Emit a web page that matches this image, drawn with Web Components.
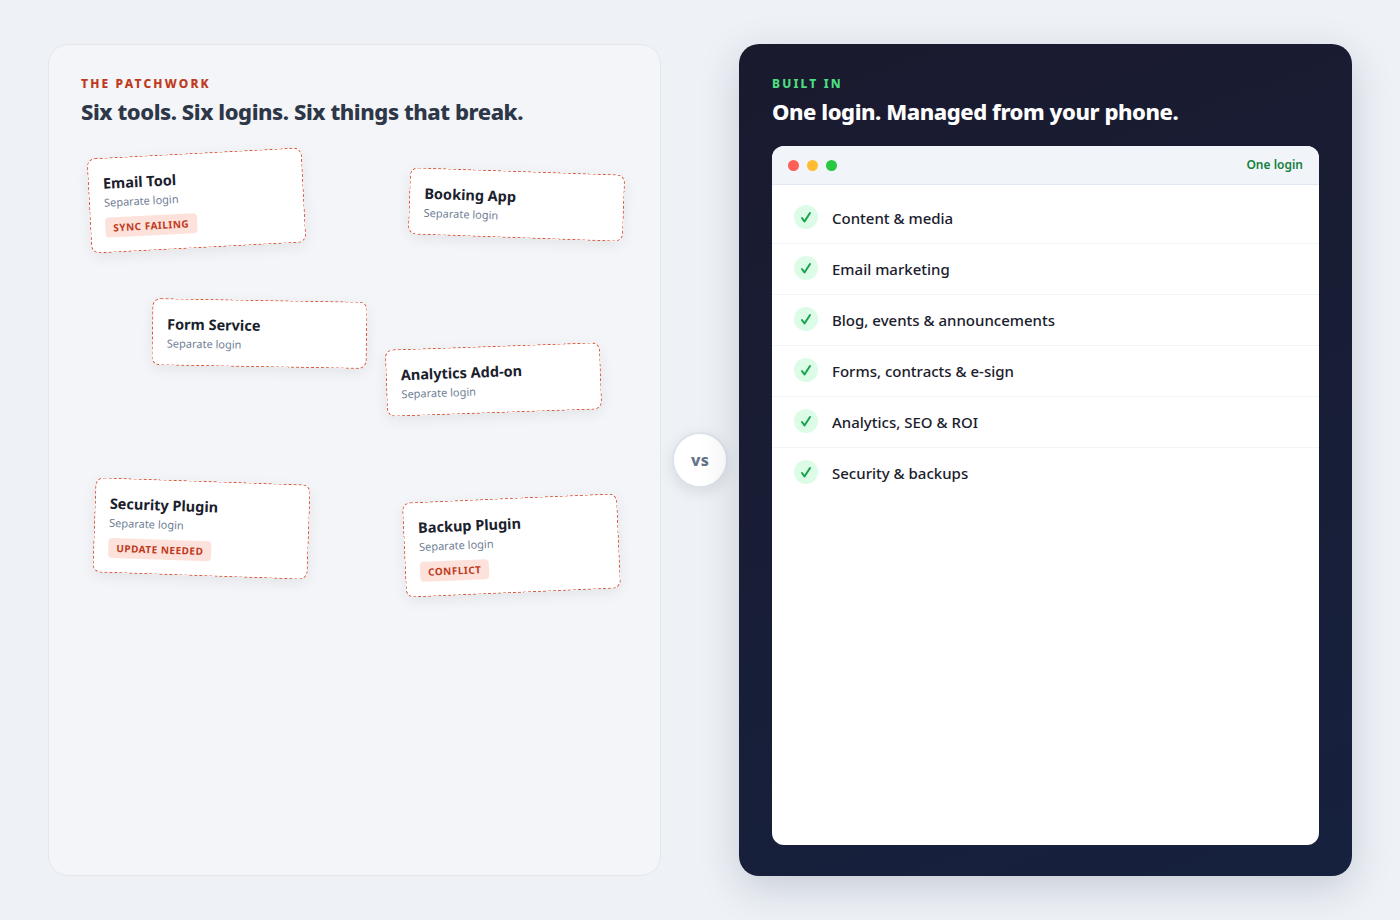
<!DOCTYPE html>
<html><head><meta charset="utf-8"><style>
html,body{margin:0;padding:0;background:#eef2f7;}
body{font-family:"Noto Sans",sans-serif;}
</style></head><body>
<compare-page>
<side-panel slot="left" data-kind="patch" eyebrow="THE PATCHWORK" title="Six tools. Six logins. Six things that break.">
<tool-card style="left:40px;top:108px" data-rot="-3" name="Email Tool" tag="SYNC FAILING"></tool-card>
<tool-card style="left:360px;top:126px" data-rot="2" name="Booking App"></tool-card>
<tool-card style="left:103px;top:255px" data-rot="1" name="Form Service"></tool-card>
<tool-card style="left:337px;top:301px" data-rot="-2" name="Analytics Add-on"></tool-card>
<tool-card style="left:45px;top:436px" data-rot="2" name="Security Plugin" tag="UPDATE NEEDED"></tool-card>
<tool-card style="left:355px;top:453px" data-rot="-2.5" name="Backup Plugin" tag="CONFLICT"></tool-card>
</side-panel>
<vs-badge slot="vs"></vs-badge>
<side-panel slot="right" data-kind="built" eyebrow="BUILT IN" title="One login. Managed from your phone.">
<app-window>
<check-row>Content &amp; media</check-row>
<check-row>Email marketing</check-row>
<check-row>Blog, events &amp; announcements</check-row>
<check-row>Forms, contracts &amp; e-sign</check-row>
<check-row>Analytics, SEO &amp; ROI</check-row>
<check-row last>Security &amp; backups</check-row>
</app-window>
</side-panel>
</compare-page>
<script>
function def(name, html, init){
  customElements.define(name, class extends HTMLElement{
    constructor(){super();this.attachShadow({mode:'open'}).innerHTML=html;}
    connectedCallback(){ if(init) init.call(this,this.shadowRoot); }
  });
}
def('compare-page',`<style>
:host{display:grid;grid-template-columns:613px 78px 613px;width:1304px;height:832px;padding:44px 48px;position:relative}
::slotted([slot=vs]){align-self:center;justify-self:center}
</style><slot name="left"></slot><slot name="vs"></slot><slot name="right"></slot>`);
def('side-panel',`<style>
:host{display:flex;flex-direction:column;box-sizing:border-box;border-radius:20px;padding:32px 33px 31px;position:relative;height:832px;min-width:0}
:host([data-kind=patch]){background:#f3f5f8;border:1px solid #e4e8ee;padding:31px 32px}
:host([data-kind=built]){background:linear-gradient(160deg,#1a1a2e,#16213e);box-shadow:0 12px 40px rgba(22,33,62,.18)}
.eb{font:800 12px/16px "Noto Sans",sans-serif;letter-spacing:2.16px}
:host([data-kind=patch]) .eb{color:#c0391b}
:host([data-kind=built]) .eb{color:#4ade80}
h2{margin:0;font:800 22px/30px "Noto Sans",sans-serif;letter-spacing:-.44px;margin-top:4px;margin-bottom:20px}
:host([data-kind=patch]) h2{color:#2d3748}
:host([data-kind=built]) h2{color:#fff}
.body{flex:1;min-height:0;display:flex;flex-direction:column}
</style><div class="eb"></div><h2></h2><div class="body"><slot></slot></div>`,function(r){
 r.querySelector('.eb').textContent=this.getAttribute('eyebrow');
 r.querySelector('h2').textContent=this.getAttribute('title');
});
def('tool-card',`<style>
:host{position:absolute;display:block;width:215px;box-sizing:border-box;background:#fff;border:1px dashed #d9573a;border-radius:8px;padding:14px 14px;box-shadow:0 4px 14px rgba(0,0,0,.07);}
.n{font:700 14.5px/20px "Noto Sans",sans-serif;color:#1a202c}
.s{font:400 11px/15px "Noto Sans",sans-serif;color:#718096;margin-top:2px}
.t{display:inline-block;font:700 10px/14px "Noto Sans",sans-serif;letter-spacing:.5px;color:#c0391b;background:#fde2dc;border-radius:4px;padding:3px 8px;margin-top:8px}
</style><div class="n"></div><div class="s">Separate login</div>`,function(r){
 r.querySelector('.n').textContent=this.getAttribute('name');
 this.style.transform='rotate('+this.dataset.rot+'deg)';
 const t=this.getAttribute('tag');
 if(t&&!r.querySelector('.t')){const d=document.createElement('div');d.innerHTML='<span class="t"></span>';d.firstChild.textContent=t;r.appendChild(d);}
});
def('vs-badge',`<style>
:host{display:flex;align-items:center;justify-content:center;width:52px;height:52px;border-radius:50%;background:#fff;border:2px solid #dde3ea;box-shadow:0 4px 16px rgba(0,0,0,.1);font:800 16px/1 "Noto Sans",sans-serif;color:#64748b;letter-spacing:.3px;box-sizing:content-box}
</style>vs`);
def('app-window',`<style>
:host{display:flex;flex-direction:column;flex:1;background:#fff;border-radius:12px;overflow:hidden}
.bar{display:flex;align-items:center;gap:8px;height:38px;padding:0 16px;background:#f1f5f9;border-bottom:1px solid #e2e8f0}
i{width:11px;height:11px;border-radius:50%;display:block}
.l{margin-left:auto;font:600 12px/16px "Noto Sans",sans-serif;color:#15803d}
.list{padding:8px 0}
</style><div class="bar"><i style="background:#ff5f57"></i><i style="background:#febc2e"></i><i style="background:#28c840"></i><span class="l">One login</span></div><div class="list"><slot></slot></div>`);
def('check-row',`<style>
:host{display:flex;align-items:center;gap:14px;height:50px;padding:0 22px;border-bottom:1px solid #f1f5f9;font:500 15px/20px "Noto Sans",sans-serif;color:#1a202c}
:host([last]){border-bottom:0}
.c{width:24px;height:24px;border-radius:50%;background:#dcfce7;display:flex;align-items:center;justify-content:center;flex:none;margin-top:-2px}
</style><span class="c"><svg width="14" height="14" viewBox="0 0 14 14" fill="none" stroke="#16a34a" stroke-width="2" stroke-linecap="round" stroke-linejoin="round"><path d="M3 8l2.5 3.5L11 3"/></svg></span><span><slot></slot></span>`);
</script>
</body></html>
